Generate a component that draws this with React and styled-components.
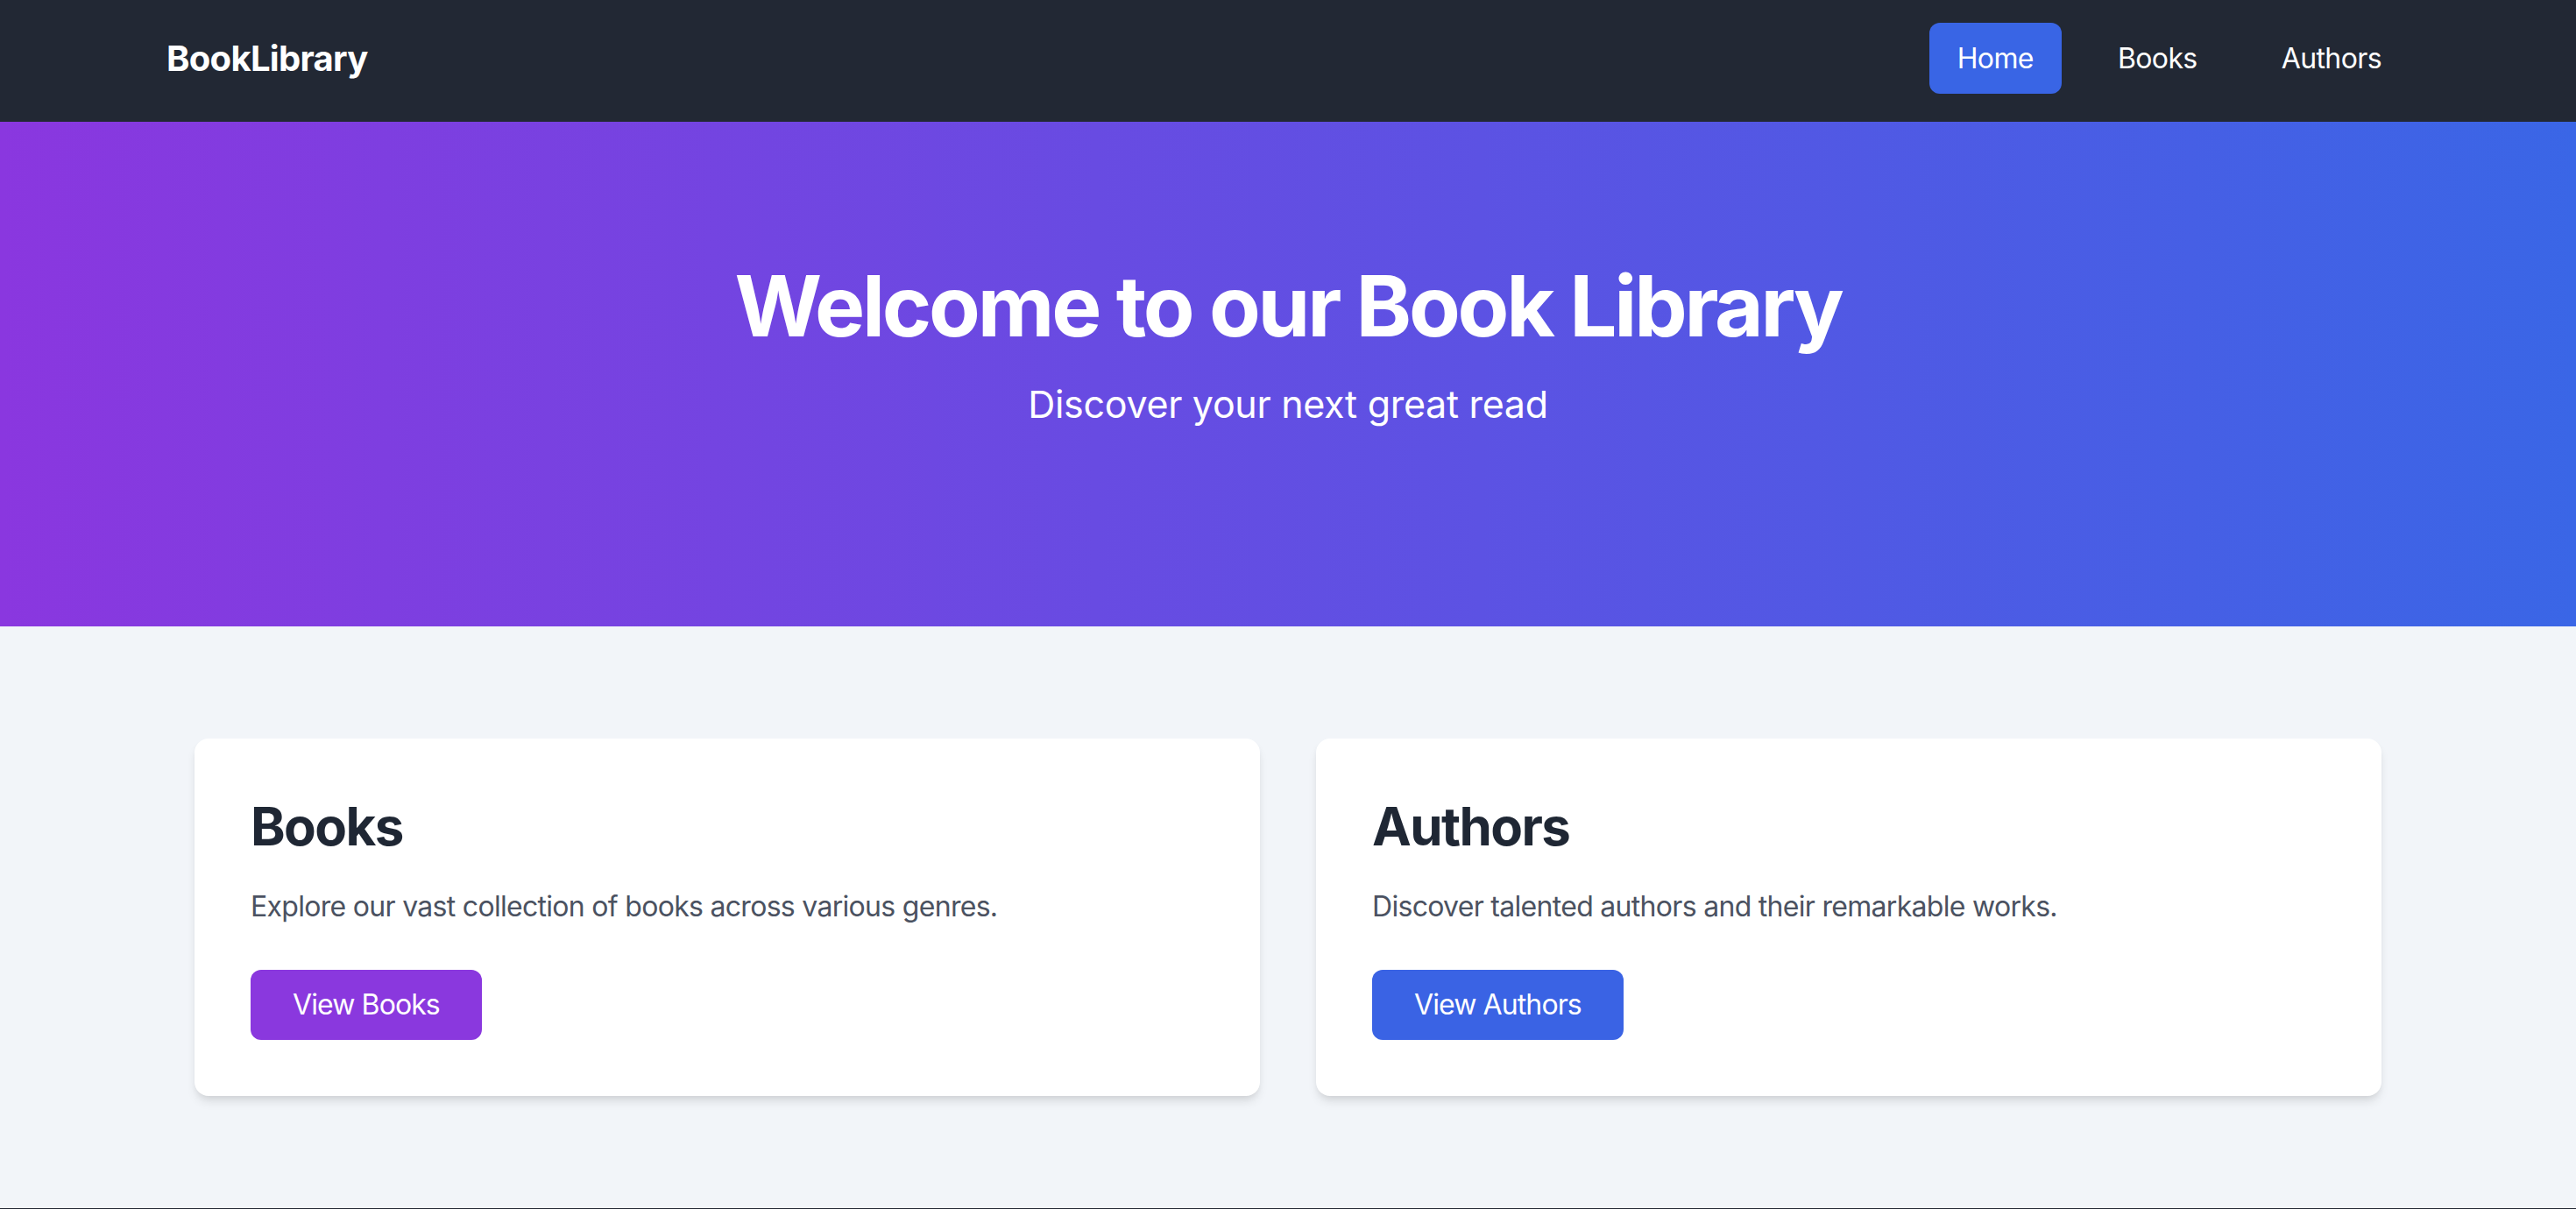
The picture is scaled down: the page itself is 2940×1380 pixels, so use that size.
import React from "react";
import styled, { createGlobalStyle } from "styled-components";

const GlobalStyle = createGlobalStyle`
  * { box-sizing: border-box; }
  html, body { margin: 0; padding: 0; }
  body {
    font-family: Inter, "Noto Sans", "Liberation Sans", sans-serif;
    background: #f2f5f9;
    -webkit-font-smoothing: antialiased;
  }
`;

const Page = styled.div`
  min-height: 100vh;
  display: flex;
  flex-direction: column;
  background: #f2f5f9;
`;

const NavBar = styled.nav`
  background: #222834;
  height: 139px;
  padding-bottom: 6px;
  display: flex;
  align-items: center;
  flex-shrink: 0;
`;

const NavInner = styled.div`
  width: 100%;
  max-width: 2560px;
  margin: 0 auto;
  display: flex;
  align-items: center;
  justify-content: space-between;
`;

const Logo = styled.a`
  color: #ffffff;
  font-size: 40px;
  font-weight: 700;
  line-height: 56px;
  letter-spacing: -0.7px;
  text-decoration: none;
`;

const NavLinks = styled.div`
  display: flex;
  align-items: center;
  gap: 32px;
`;

const NavLink = styled.a`
  display: inline-flex;
  align-items: center;
  height: 81px;
  padding: 0 32px;
  border-radius: 12px;
  color: #ffffff;
  font-size: 32px;
  line-height: 48px;
  letter-spacing: -0.6px;
  text-decoration: none;
  background: ${(p) => (p.$active ? "#3965e5" : "transparent")};
`;

const Hero = styled.header`
  height: 576px;
  flex-shrink: 0;
  background: linear-gradient(90deg, #8a37df 0%, #3a66e6 100%);
  display: flex;
  flex-direction: column;
  align-items: center;
  padding-top: 162px;
  color: #ffffff;
  text-align: center;
`;

const HeroTitle = styled.h1`
  margin: 0 0 34px;
  font-size: 96px;
  line-height: 96px;
  font-weight: 700;
  letter-spacing: -3.2px;
`;

const HeroSubtitle = styled.p`
  margin: 0;
  font-size: 43px;
  line-height: 60px;
  font-weight: 400;
  letter-spacing: -0.3px;
`;

const Main = styled.main`
  width: 100%;
  max-width: 2560px;
  margin: 0 auto;
  padding: 128px 32px 128px;
  display: grid;
  grid-template-columns: 1fr 1fr;
  gap: 64px;
`;

const Card = styled.section`
  background: #ffffff;
  border-radius: 16px;
  padding: 64px;
  box-shadow: 0 8px 12px -2px rgba(0, 0, 0, 0.1), 0 4px 8px -4px rgba(0, 0, 0, 0.1);
`;

const CardTitle = styled.h2`
  margin: 0 0 32px;
  font-size: 60px;
  line-height: 72px;
  font-weight: 700;
  letter-spacing: -1.6px;
  color: #1f2734;
`;

const CardText = styled.p`
  margin: 0 0 48px;
  font-size: 32px;
  line-height: 48px;
  letter-spacing: -0.7px;
  color: #4b5261;
`;

const Button = styled.a`
  display: inline-flex;
  align-items: center;
  height: 80px;
  padding: 0 48px;
  border-radius: 12px;
  font-size: 32px;
  line-height: 48px;
  letter-spacing: -0.9px;
  color: #ffffff;
  text-decoration: none;
  background: ${(p) => p.$color};
`;

const Footer = styled.footer`
  background: #222834;
  height: 120px;
  flex-shrink: 0;
`;

const cards = [
  {
    title: "Books",
    text: "Explore our vast collection of books across various genres.",
    button: "View Books",
    color: "#8a38de",
  },
  {
    title: "Authors",
    text: "Discover talented authors and their remarkable works.",
    button: "View Authors",
    color: "#3a63e4",
  },
];

export default function App() {
  return (
    <>
      <GlobalStyle />
      <Page>
        <NavBar>
          <NavInner>
            <Logo href="#">BookLibrary</Logo>
            <NavLinks>
              <NavLink href="#" $active>Home</NavLink>
              <NavLink href="#">Books</NavLink>
              <NavLink href="#">Authors</NavLink>
            </NavLinks>
          </NavInner>
        </NavBar>
        <Hero>
          <HeroTitle>Welcome to our Book Library</HeroTitle>
          <HeroSubtitle>Discover your next great read</HeroSubtitle>
        </Hero>
        <Main>
          {cards.map((c) => (
            <Card key={c.title}>
              <CardTitle>{c.title}</CardTitle>
              <CardText>{c.text}</CardText>
              <Button href="#" $color={c.color}>{c.button}</Button>
            </Card>
          ))}
        </Main>
        <Footer />
      </Page>
    </>
  );
}
